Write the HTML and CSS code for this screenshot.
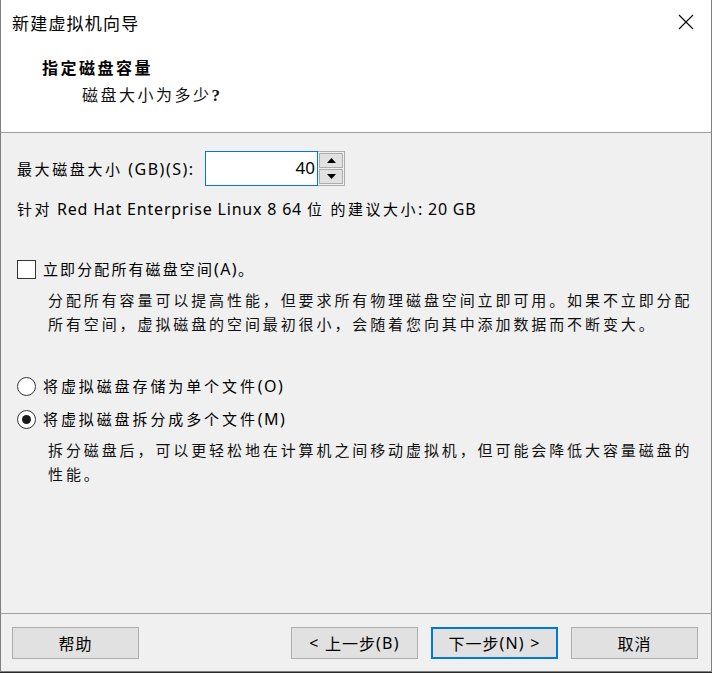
FILE: index.html
```html
<!DOCTYPE html>
<html lang="zh-CN">
<head>
<meta charset="utf-8">
<title>新建虚拟机向导</title>
<link rel="stylesheet" href="styles.css">
</head>
<body>
<div class="window">
  <div class="titlebar">
    <span class="title">新建虚拟机向导</span>
    <svg class="close" width="16" height="16" viewBox="0 0 16 16"><path d="M1 1 L15 15 M15 1 L1 15" stroke="#000" stroke-width="1.1" fill="none"/></svg>
  </div>
  <div class="header">
    <div class="h-title">指定磁盘容量</div>
    <div class="h-sub">磁盘大小为多少<span class="q">?</span></div>
  </div>
  <div class="body">
    <div class="size-row">
      <span class="label">最大磁盘大小<span class="en"> (GB)(S):</span></span>
      <div class="input">40</div>
      <div class="spinner">
        <div class="spin-btn"><svg width="9" height="5" viewBox="0 0 9 5"><path d="M4.5 0 L9 5 L0 5 Z" fill="#000"/></svg></div>
        <div class="spin-btn"><svg width="9" height="5" viewBox="0 0 9 5"><path d="M0 0 L9 0 L4.5 5 Z" fill="#000"/></svg></div>
      </div>
    </div>
    <div class="recommend">针对<span class="en"> Red Hat Enterprise Linux 8 64 </span>位 的建议大小<span class="en">: 20 GB</span></div>
    <div class="option check-opt">
      <span class="checkbox"></span>
      <span class="opt-text">立即分配所有磁盘空间<span class="en">(A)</span>。</span>
    </div>
    <div class="para">分配所有容量可以提高性能，但要求所有物理磁盘空间立即可用。如果不立即分配<br>所有空间，虚拟磁盘的空间最初很小，会随着您向其中添加数据而不断变大。</div>
    <div class="option radio-opt first">
      <span class="radio"></span>
      <span class="opt-text">将虚拟磁盘存储为单个文件<span class="en">(O)</span></span>
    </div>
    <div class="option radio-opt">
      <span class="radio checked"></span>
      <span class="opt-text">将虚拟磁盘拆分成多个文件<span class="en">(M)</span></span>
    </div>
    <div class="para">拆分磁盘后，可以更轻松地在计算机之间移动虚拟机，但可能会降低大容量磁盘的<br>性能。</div>
  </div>
  <div class="footer">
    <button class="btn">帮助</button>
    <div class="spacer"></div>
    <button class="btn"><span class="en">&lt;&nbsp;</span>上一步<span class="en">(B)</span></button>
    <button class="btn default">下一步<span class="en">(N)&nbsp;&gt;</span></button>
    <button class="btn">取消</button>
  </div>
</div>
</body>
</html>
```

FILE: styles.css
```css
* { box-sizing: border-box; }
html, body { margin: 0; padding: 0; background: #2b2b2b; }
body { width: 712px; height: 673px; overflow: hidden; font-family: "Noto Sans CJK SC", "Microsoft YaHei", sans-serif; color: #000; }

.window {
  width: 712px;
  height: 672px;
  border: 1px solid #7f7f7f;
  border-top: none;
  background: #f0f0f0;
  display: flex;
  flex-direction: column;
}

.titlebar {
  height: 44px;
  background: #fff;
  display: flex;
  align-items: center;
  justify-content: space-between;
  padding: 0 17px 0 11px;
}
.title { font-size: 17px; letter-spacing: 1.2px; line-height: 1; }
.close { display: block; }

.header {
  height: 89px;
  background: #fff;
  border-bottom: 1px solid #a0a0a0;
  padding-left: 41px;
  padding-top: 13px;
}
.h-title { font-size: 16px; font-weight: bold; letter-spacing: 2.5px; line-height: 20px; }
.h-sub { font-size: 16px; letter-spacing: 2.5px; line-height: 20px; margin-left: 40px; margin-top: 7px; color: #111; }
.q { font-family: "Liberation Serif", serif; font-weight: bold; font-size: 17px; letter-spacing: 0; }

.en { font-family: "Noto Sans", sans-serif; font-size: 16px; letter-spacing: 1.4px; }

.body {
  flex: 1;
  padding: 18px 0 0 16px;
  font-size: 15px;
}

.size-row { display: flex; align-items: center; height: 35px; }
.label { letter-spacing: 2.6px; margin-right: 7px; width: 181px; white-space: nowrap; }
.label .en { letter-spacing: 1.5px; }
.input {
  width: 113px;
  height: 35px;
  background: #fff;
  border: 1px solid #0078d7;
  text-align: right;
  font-family: "Noto Sans", sans-serif;
  font-size: 17px;
  line-height: 31px;
  padding-right: 2px;
}
.spinner {
  width: 27px;
  height: 35px;
  border: 1px solid #adadad;
  border-left: none;
  padding: 1px;
  display: flex;
  flex-direction: column;
  gap: 1px;
  background: #f0f0f0;
}
.spin-btn {
  flex: 1;
  background: #e1e1e1;
  border: 1px solid #adadad;
  display: flex;
  align-items: center;
  justify-content: center;
}
.spin-btn svg { display: block; }

.recommend { margin-top: 13px; line-height: 20px; white-space: nowrap; letter-spacing: 2.5px; }
.recommend .en { letter-spacing: 0.8px; }

.option { display: flex; align-items: center; height: 20px; }
.check-opt { margin-top: 40px; }
.opt-text { margin-left: 7px; letter-spacing: 2.1px; white-space: nowrap; }
.radio-opt .opt-text { letter-spacing: 2.9px; }
.opt-text .en { letter-spacing: 1.4px; }

.checkbox {
  width: 19px;
  height: 19px;
  border: 1px solid #333;
  background: #fff;
  flex: none;
}
.radio {
  width: 19px;
  height: 19px;
  border: 1px solid #333;
  border-radius: 50%;
  background: #fff;
  flex: none;
  display: flex;
  align-items: center;
  justify-content: center;
}
.radio.checked::after {
  content: "";
  width: 9px;
  height: 9px;
  border-radius: 50%;
  background: #1a1a1a;
}

.para {
  margin: 9px 0 0 31px;
  line-height: 24px;
  letter-spacing: 2.9px;
  white-space: nowrap;
  color: #111;
}

.radio-opt.first { margin-top: 40px; }
.radio-opt + .radio-opt { margin-top: 13px; }

.footer {
  height: 58px;
  border-top: 1px solid #a0a0a0;
  display: flex;
  align-items: flex-start;
  padding: 13px 13px 0 11px;
  gap: 13px;
}
.spacer { flex: 1; }
.btn {
  width: 127px;
  height: 32px;
  background: #e1e1e1;
  border: 1px solid #adadad;
  font-family: "Noto Sans CJK SC", sans-serif;
  font-size: 16px;
  letter-spacing: 1px;
  color: #000;
  padding: 0;
  margin: 0;
  display: flex;
  align-items: center;
  justify-content: center;
}
.btn .en { font-size: 16px; letter-spacing: 1.2px; }
.btn.default { border: 2px solid #0078d7; }
```
